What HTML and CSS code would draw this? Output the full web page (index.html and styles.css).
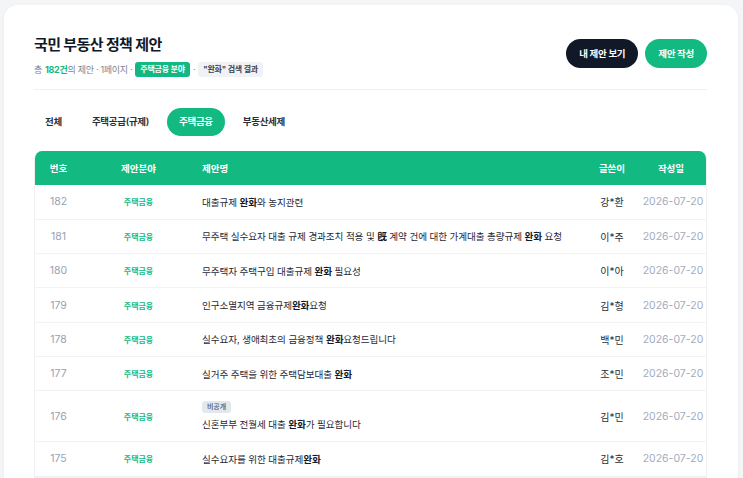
FILE: index.html
```html
<!DOCTYPE html>
<html lang="ko">
<head>
    <meta charset="UTF-8">
    <meta name="viewport" content="width=device-width, initial-scale=1.0">
    <title>국민 부동산 정책 제안</title>
    <link rel="stylesheet" href="styles.css">
</head>
<body>
    <main class="card">
        <!-- En-tête -->
        <header class="page-head">
            <div class="head-text">
                <h1>국민 부동산 정책 제안</h1>
                <p class="summary">
                    총 <strong>182건</strong>의 제안 · 1페이지 ·
                    <span class="badge badge-green">주택금융 분야</span> ·
                    <span class="badge badge-gray">"완화" 검색 결과</span>
                </p>
            </div>
            <div class="head-actions">
                <a href="#" class="btn btn-dark">내 제안 보기</a>
                <a href="#" class="btn btn-green">제안 작성</a>
            </div>
        </header>

        <div class="divider"></div>

        <!-- Onglets -->
        <nav class="tabs">
            <a href="#" class="tab">전체</a>
            <a href="#" class="tab">주택공급(규제)</a>
            <a href="#" class="tab active">주택금융</a>
            <a href="#" class="tab">부동산세제</a>
        </nav>

        <!-- Tableau -->
        <div class="table-wrap">
            <table class="list">
                <colgroup>
                    <col class="c-num">
                    <col class="c-cat">
                    <col class="c-title">
                    <col class="c-author">
                    <col class="c-date">
                </colgroup>
                <thead>
                    <tr>
                        <th>번호</th>
                        <th>제안분야</th>
                        <th class="left">제안명</th>
                        <th>글쓴이</th>
                        <th>작성일</th>
                    </tr>
                </thead>
                <tbody>
                    <tr>
                        <td class="num">182</td>
                        <td class="cat">주택금융</td>
                        <td class="title">대출규제 <b>완화</b>와 농지관련</td>
                        <td class="author">강*환</td>
                        <td class="date">2026-07-20</td>
                    </tr>
                    <tr>
                        <td class="num">181</td>
                        <td class="cat">주택금융</td>
                        <td class="title">무주택 실수요자 대출 규제 경과조치 적용 및 <b>旣</b> 계약 건에 대한 가계대출 총량규제 <b>완화</b> 요청</td>
                        <td class="author">이*주</td>
                        <td class="date">2026-07-20</td>
                    </tr>
                    <tr>
                        <td class="num">180</td>
                        <td class="cat">주택금융</td>
                        <td class="title">무주택자 주택구입 대출규제 <b>완화</b> 필요성</td>
                        <td class="author">이*아</td>
                        <td class="date">2026-07-20</td>
                    </tr>
                    <tr>
                        <td class="num">179</td>
                        <td class="cat">주택금융</td>
                        <td class="title">인구소멸지역 금융규제<b>완화</b>요청</td>
                        <td class="author">김*형</td>
                        <td class="date">2026-07-20</td>
                    </tr>
                    <tr>
                        <td class="num">178</td>
                        <td class="cat">주택금융</td>
                        <td class="title">실수요자, 생애최초의 금융정책 <b>완화</b>요청드립니다</td>
                        <td class="author">백*민</td>
                        <td class="date">2026-07-20</td>
                    </tr>
                    <tr>
                        <td class="num">177</td>
                        <td class="cat">주택금융</td>
                        <td class="title">실거주 주택을 위한 주택담보대출 <b>완화</b></td>
                        <td class="author">조*민</td>
                        <td class="date">2026-07-20</td>
                    </tr>
                    <tr class="tall">
                        <td class="num">176</td>
                        <td class="cat">주택금융</td>
                        <td class="title"><span class="private">비공개</span><br>신혼부부 전월세 대출 <b>완화</b>가 필요합니다</td>
                        <td class="author">김*민</td>
                        <td class="date">2026-07-20</td>
                    </tr>
                    <tr>
                        <td class="num">175</td>
                        <td class="cat">주택금융</td>
                        <td class="title">실수요자를 위한 대출규제<b>완화</b></td>
                        <td class="author">김*호</td>
                        <td class="date">2026-07-20</td>
                    </tr>
                </tbody>
            </table>
        </div>
    </main>
</body>
</html>
```

FILE: styles.css
```css
* {
    margin: 0;
    padding: 0;
    box-sizing: border-box;
    font-family: Inter, "Noto Sans CJK KR", sans-serif;
}

body {
    background-color: #f4f5f7;
    padding: 5px 5px 0 4px;
    height: 100vh;
    overflow: hidden;
}

a {
    text-decoration: none;
}

/* Carte principale */
.card {
    background-color: white;
    border-radius: 14px;
    box-shadow: 0 1px 4px rgba(0, 0, 0, 0.04);
    padding: 29px 31px 40px 30px;
    min-height: 600px;
}

.page-head {
    display: flex;
    justify-content: space-between;
    align-items: center;
}

.page-head h1 {
    font-size: 15px;
    font-weight: 700;
    color: #111827;
    letter-spacing: -0.6px;
    line-height: 22px;
}

.summary {
    margin-top: 6px;
    font-size: 9px;
    color: #7b8494;
    letter-spacing: -0.3px;
    display: flex;
    align-items: center;
    gap: 3px;
}

.summary strong {
    color: #10b981;
    font-weight: 700;
    margin-right: -3px;
}

.badge {
    display: inline-block;
    font-size: 8px;
    font-weight: 700;
    padding: 2px 5px;
    border-radius: 3px;
    line-height: 11px;
    letter-spacing: -0.2px;
}

.badge-green {
    background-color: #12b883;
    color: white;
}

.badge-gray {
    background-color: #f0f2f5;
    color: #374151;
}

.head-actions {
    display: flex;
    gap: 7px;
    margin-top: -4px;
}

.btn {
    display: inline-block;
    height: 29px;
    line-height: 29px;
    padding: 0 13px;
    border-radius: 15px;
    font-size: 9.5px;
    font-weight: 700;
    letter-spacing: -0.3px;
    color: white;
}

.btn-dark {
    background-color: #111827;
}

.btn-green {
    background-color: #12b981;
}

.divider {
    height: 1px;
    background-color: #eef0f3;
    margin: 12px 0 0;
}

/* Onglets */
.tabs {
    display: flex;
    align-items: center;
    margin-top: 18px;
    margin-bottom: 16px;
}

.tab {
    display: inline-block;
    height: 28px;
    line-height: 28px;
    padding: 0 12px;
    margin-right: 6px;
    border-radius: 14px;
    font-size: 9.5px;
    font-weight: 600;
    letter-spacing: -0.3px;
    color: #2b2f36;
}

.tab:first-child {
    padding-left: 11px;
}

.tab.active {
    background-color: #12b981;
    color: white;
}

/* Tableau */
.table-wrap {
    border: 1px solid #eef0f2;
    border-top: none;
    border-radius: 8px 8px 0 0;
    overflow: hidden;
    margin-top: -1px;
}

.list {
    width: 100%;
    border-collapse: collapse;
    table-layout: fixed;
}

.c-num { width: 47px; }
.c-cat { width: 113px; }
.c-title { width: auto; }
.c-author { width: 48px; }
.c-date { width: 70px; }

.list th {
    background-color: #12b981;
    color: white;
    font-size: 9.5px;
    font-weight: 700;
    height: 34px;
    text-align: center;
}

.list th.left {
    text-align: left;
    padding-left: 7px;
}

.list td {
    height: 34.3px;
    border-bottom: 1px solid #f1f3f5;
    text-align: center;
    white-space: nowrap;
}

.list tr.tall td {
    height: 51px;
}

.num {
    font-size: 10.5px;
    color: #98a1b3;
}

.cat {
    font-size: 8px;
    font-weight: 700;
    color: #12b981;
}

.list td.title {
    text-align: left;
    padding-left: 7px;
    font-size: 9.6px;
    letter-spacing: -0.1px;
    color: #1f2937;
}

.title b {
    font-weight: 700;
    color: #111827;
}

.private {
    display: inline-block;
    font-size: 7px;
    font-weight: 500;
    color: #4b5563;
    background-color: #e3e8ee;
    border-radius: 3px;
    padding: 1px 5px;
    line-height: 10px;
    margin-bottom: 4px;
    vertical-align: top;
}

.author {
    font-size: 10px;
    color: #2b2f36;
}

.date {
    font-size: 10.5px;
    color: #a3acbd;
    padding-left: 4px;
}
```
